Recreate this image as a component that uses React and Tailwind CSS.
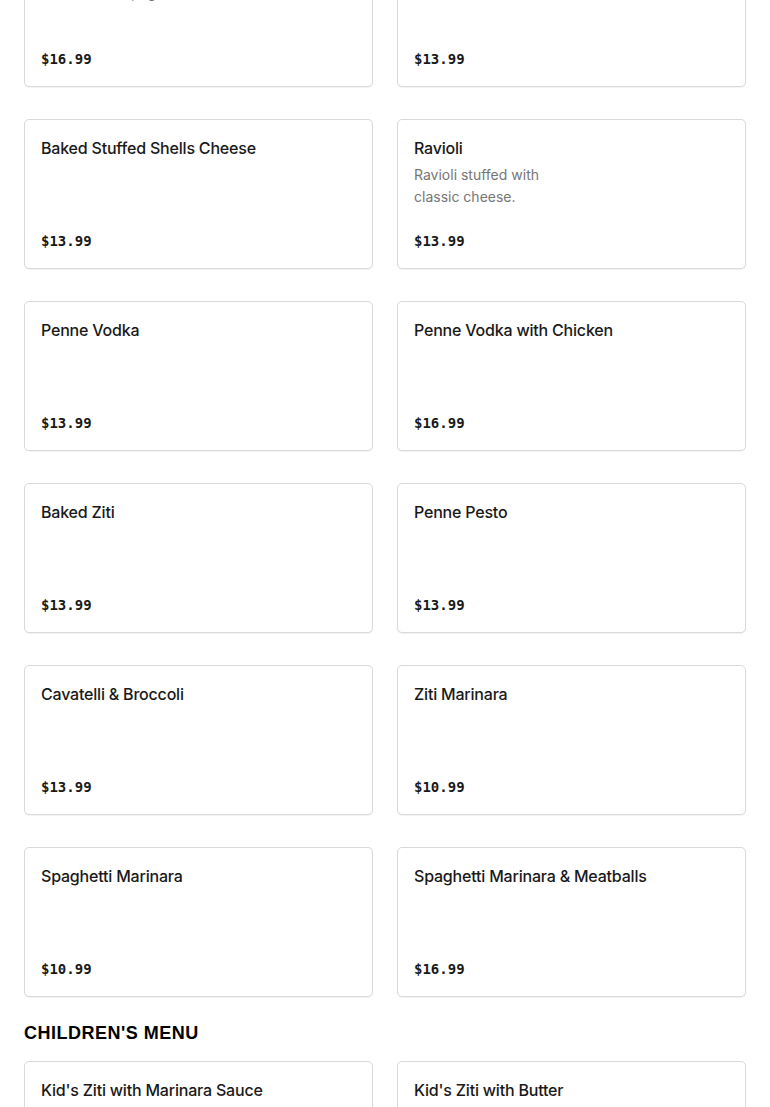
const pastas = [
  { name: 'Chicken Parmigiana', desc: 'Served with spaghetti.', price: '$16.99' },
  { name: 'Stuffed Shells', price: '$13.99' },
  { name: 'Baked Stuffed Shells Cheese', price: '$13.99' },
  { name: 'Ravioli', desc: 'Ravioli stuffed with classic cheese.', price: '$13.99' },
  { name: 'Penne Vodka', price: '$13.99' },
  { name: 'Penne Vodka with Chicken', price: '$16.99' },
  { name: 'Baked Ziti', price: '$13.99' },
  { name: 'Penne Pesto', price: '$13.99' },
  { name: 'Cavatelli & Broccoli', price: '$13.99' },
  { name: 'Ziti Marinara', price: '$10.99' },
  { name: 'Spaghetti Marinara', price: '$10.99' },
  { name: 'Spaghetti Marinara & Meatballs', price: '$16.99' },
];

const kids = [
  { name: "Kid's Ziti with Marinara Sauce", price: '$8.99' },
  { name: "Kid's Ziti with Butter", price: '$8.99' },
];

const MenuCard = ({ item }) => (
  <div className="h-[150px] bg-white border border-[#d9d9d9] rounded-[5px] shadow-[0_1px_1px_rgba(0,0,0,0.05)] px-4 pt-4 pb-[17px] flex flex-col justify-between">
    <div>
      <h4 className="text-[16px] leading-6 font-medium tracking-[-0.2px] text-[#191919]">{item.name}</h4>
      {item.desc && (
        <p className="mt-[4px] max-w-[150px] text-[14px] leading-[22px] text-[#767676]">{item.desc}</p>
      )}
    </div>
    <p className="text-[14px] leading-5 font-bold text-[#191919] font-['DejaVu_Sans_Mono',monospace]">
      {item.price}
    </p>
  </div>
);

export default function App() {
  return (
    <div className="min-h-screen bg-white px-6 font-['Inter',sans-serif] overflow-hidden">
      <div className="-mt-[63px] grid grid-cols-2 gap-x-6 gap-y-8">
        {pastas.map((item) => (
          <MenuCard key={item.name} item={item} />
        ))}
      </div>
      <div className="pt-6">
        <h3 className="mb-4 text-[18px] leading-6 font-black uppercase tracking-[0.5px] text-black font-['Liberation_Sans',sans-serif]">
          Children's Menu
        </h3>
        <div className="grid grid-cols-2 gap-x-6 gap-y-8">
          {kids.map((item) => (
            <MenuCard key={item.name} item={item} />
          ))}
        </div>
      </div>
    </div>
  );
}
